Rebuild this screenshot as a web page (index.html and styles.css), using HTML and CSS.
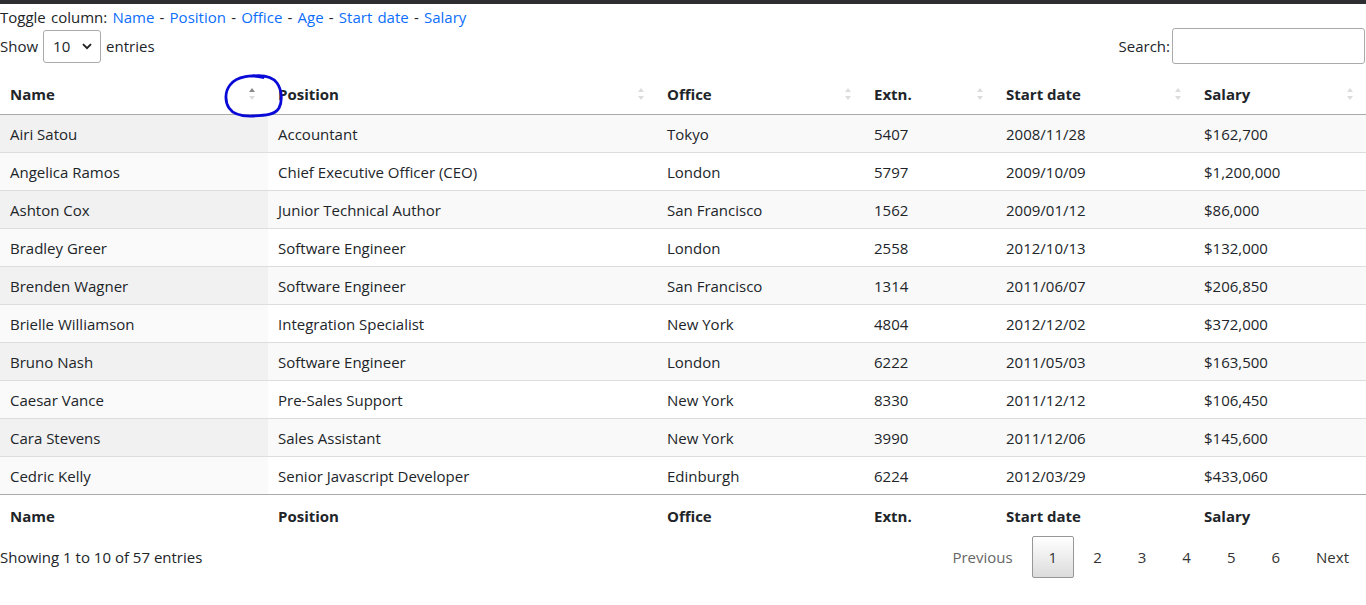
FILE: index.html
```html
<!DOCTYPE html>
<html>
<head>
<meta charset="utf-8">
<link rel="stylesheet" href="styles.css">
</head>
<body>
<div class="topbar"></div>
<div class="toggle">Toggle column: <a>Name</a> - <a>Position</a> - <a>Office</a> - <a>Age</a> - <a>Start date</a> - <a>Salary</a></div>
<div class="controls">
  <label class="length">Show <span class="select"><span>10</span><svg width="10" height="7" viewBox="0 0 10 7"><path d="M1 1.2 L5 5.2 L9 1.2" fill="none" stroke="#222" stroke-width="1.9"/></svg></span> entries</label>
  <label class="search">Search:<span class="input"></span></label>
</div>
<div class="tablewrap">
<table class="display">
  <colgroup><col class="c1"><col class="c2"><col class="c3"><col class="c4"><col class="c5"><col class="c6"></colgroup>
  <thead>
    <tr>
      <th class="sort asc">Name<span class="up"></span><span class="dn"></span></th>
      <th class="sort">Position<span class="up"></span><span class="dn"></span></th>
      <th class="sort">Office<span class="up"></span><span class="dn"></span></th>
      <th class="sort">Extn.<span class="up"></span><span class="dn"></span></th>
      <th class="sort">Start date<span class="up"></span><span class="dn"></span></th>
      <th class="sort">Salary<span class="up"></span><span class="dn"></span></th>
    </tr>
  </thead>
  <tbody>
    <tr class="odd"><td class="s1">Airi Satou</td><td>Accountant</td><td>Tokyo</td><td>5407</td><td>2008/11/28</td><td>$162,700</td></tr>
    <tr class="even"><td class="s1">Angelica Ramos</td><td>Chief Executive Officer (CEO)</td><td>London</td><td>5797</td><td>2009/10/09</td><td>$1,200,000</td></tr>
    <tr class="odd"><td class="s1">Ashton Cox</td><td>Junior Technical Author</td><td>San Francisco</td><td>1562</td><td>2009/01/12</td><td>$86,000</td></tr>
    <tr class="even"><td class="s1">Bradley Greer</td><td>Software Engineer</td><td>London</td><td>2558</td><td>2012/10/13</td><td>$132,000</td></tr>
    <tr class="odd"><td class="s1">Brenden Wagner</td><td>Software Engineer</td><td>San Francisco</td><td>1314</td><td>2011/06/07</td><td>$206,850</td></tr>
    <tr class="even"><td class="s1">Brielle Williamson</td><td>Integration Specialist</td><td>New York</td><td>4804</td><td>2012/12/02</td><td>$372,000</td></tr>
    <tr class="odd"><td class="s1">Bruno Nash</td><td>Software Engineer</td><td>London</td><td>6222</td><td>2011/05/03</td><td>$163,500</td></tr>
    <tr class="even"><td class="s1">Caesar Vance</td><td>Pre-Sales Support</td><td>New York</td><td>8330</td><td>2011/12/12</td><td>$106,450</td></tr>
    <tr class="odd"><td class="s1">Cara Stevens</td><td>Sales Assistant</td><td>New York</td><td>3990</td><td>2011/12/06</td><td>$145,600</td></tr>
    <tr class="even"><td class="s1">Cedric Kelly</td><td>Senior Javascript Developer</td><td>Edinburgh</td><td>6224</td><td>2012/03/29</td><td>$433,060</td></tr>
  </tbody>
  <tfoot>
    <tr><th>Name</th><th>Position</th><th>Office</th><th>Extn.</th><th>Start date</th><th>Salary</th></tr>
  </tfoot>
</table>
<svg class="annot" width="64" height="48" viewBox="0 0 64 48"><path d="M40 4.5 C30 1.5 14 2.5 7 12 C1.5 19 2 29 6 35 C10 41 18 43.5 30 43 C42 42.5 52 42 56 35 C59.5 28 59 17 54 10 C49 3.5 40 2 30 3" fill="none" stroke="#0a0ad8" stroke-width="2.8" stroke-linecap="round"/></svg>
</div>
<div class="bottom">
  <div class="info">Showing 1 to 10 of 57 entries</div>
  <div class="paginate">
    <a class="pbtn disabled">Previous</a>
    <a class="pbtn current">1</a>
    <a class="pbtn">2</a>
    <a class="pbtn">3</a>
    <a class="pbtn">4</a>
    <a class="pbtn">5</a>
    <a class="pbtn">6</a>
    <a class="pbtn">Next</a>
  </div>
</div>
</body>
</html>
```
FILE: styles.css
```css
html, body {
  margin: 0;
  padding: 0;
  background: #fff;
}
body {
  font-family: "Open Sans", "Noto Sans", "Liberation Sans", sans-serif;
  font-size: 15px;
  color: #212529;
}
.topbar {
  height: 4px;
  background: #2e2e30;
}
.toggle {
  line-height: 24px;
  padding-top: 1px;
  word-spacing: 1.3px;
}
.toggle a {
  color: #0d6efd;
  cursor: pointer;
}
.controls {
  display: flex;
  justify-content: space-between;
  align-items: center;
  height: 38px;
  margin-top: -2px;
}
.length {
  display: flex;
  align-items: center;
  gap: 4px;
}
.select {
  display: inline-flex;
  align-items: center;
  justify-content: space-between;
  box-sizing: border-box;
  width: 58px;
  height: 33px;
  border: 1px solid #aaa;
  border-radius: 3px;
  padding: 0 8px 0 9px;
  margin: 0 1px;
}
.search {
  display: flex;
  align-items: center;
  gap: 2px;
}
.input {
  display: inline-block;
  box-sizing: border-box;
  width: 193px;
  height: 36px;
  border: 1px solid #aaa;
  border-radius: 3px;
  margin-right: 1px;
}
.tablewrap {
  position: relative;
  margin-top: 8px;
}
table.display {
  width: 100%;
  table-layout: fixed;
  border-collapse: separate;
  border-spacing: 0;
}
col.c1 { width: 268px; }
col.c2 { width: 389px; }
col.c3 { width: 207px; }
col.c4 { width: 132px; }
col.c5 { width: 198px; }
col.c6 { width: 172px; }
th, td {
  text-align: left;
  white-space: nowrap;
}
thead th {
  position: relative;
  font-weight: 700;
  padding: 10px 10px 9px 10px;
  line-height: 22px;
  border-bottom: 1px solid #aaa;
}
tbody td {
  padding: 9px 10px 7px 10px;
  line-height: 21px;
  border-top: 1px solid #ddd;
}
tbody tr:first-child td {
  border-top: none;
}
tbody tr.odd { background: #f9f9f9; }
tbody tr.odd td.s1 { background: #f1f1f1; }
tbody tr.even td.s1 { background: #fafafa; }
tfoot th {
  font-weight: 700;
  padding: 10px 10px 10px 10px;
  line-height: 22px;
  border-top: 1px solid #aaa;
}
.up, .dn {
  position: absolute;
  right: 13px;
  width: 0;
  height: 0;
  border-left: 3px solid transparent;
  border-right: 3px solid transparent;
}
.up {
  top: 15px;
  border-bottom: 4px solid #dcdcdc;
}
.dn {
  top: 23px;
  border-top: 4px solid #dcdcdc;
}
th.asc .up { border-bottom-color: #8a8a8a; }
.annot {
  position: absolute;
  left: 223px;
  top: 0px;
}
.bottom {
  display: flex;
  justify-content: space-between;
  align-items: center;
  margin-top: -1px;
}
.info {
  padding-top: 0px;
}
.paginate {
  display: flex;
  align-items: center;
}
.pbtn {
  box-sizing: border-box;
  display: inline-block;
  padding: 9px 16px;
  line-height: 22px;
  text-align: center;
  margin-left: 2px;
  border: 1px solid transparent;
  border-radius: 2px;
  color: #333;
  cursor: pointer;
}
.pbtn.disabled { color: #666; }
.pbtn.current {
  border-color: #979797;
  background: linear-gradient(to bottom, #fff 0%, #dcdcdc 100%);
}
```
